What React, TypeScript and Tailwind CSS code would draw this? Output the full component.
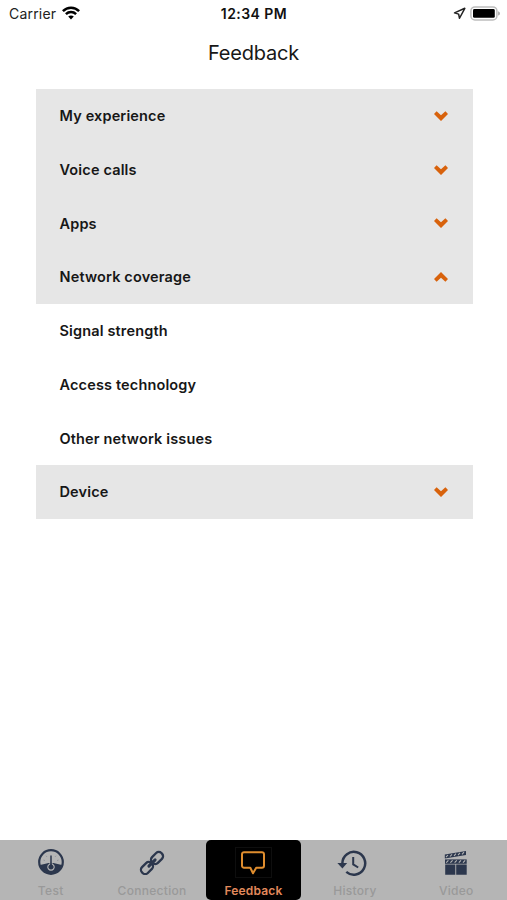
import { useState } from "react";
import type { ReactNode } from "react";

interface Category {
  title: string;
  items: string[];
}

const categories: Category[] = [
  { title: "My experience", items: [] },
  { title: "Voice calls", items: [] },
  { title: "Apps", items: [] },
  {
    title: "Network coverage",
    items: ["Signal strength", "Access technology", "Other network issues"],
  },
  { title: "Device", items: [] },
];

function StatusBar() {
  return (
    <div className="grid h-[26px] grid-cols-3 items-center pl-[9px] pr-[7px] text-[14px] text-[#222]">
      <div className="flex items-center gap-[6px]">
        <span className="tracking-[0.2px]">Carrier</span>
        <svg width="18" height="14" viewBox="0 0 18 14" fill="none" stroke="#000" strokeWidth="2.5">
          <path d="M0.9 5.1C5.4 0.5 12.6 0.5 17.1 5.1" />
          <path d="M3.9 8.2C6.8 5.4 11.2 5.4 14.1 8.2" />
          <path d="M6.2 10.6C7.8 9.2 10.2 9.2 11.8 10.6L9 13.5Z" fill="#000" stroke="none" />
        </svg>
      </div>
      <span className="-ml-[1px] text-center text-[14px] font-semibold tracking-[0.45px] text-[#111]">
        12:34 PM
      </span>
      <div className="flex items-center justify-end gap-[4px]">
        <svg width="13" height="13" viewBox="0 0 12 12" fill="none" stroke="#222" strokeWidth="1.4" strokeLinejoin="round">
          <path d="M10.9 1.2L1.4 5.4L5.2 6.6L6 10.4Z" />
        </svg>
        <svg width="30" height="15" viewBox="0 0 30 15" fill="none">
          <rect x="0.9" y="0.9" width="26" height="13" rx="4" stroke="#bdbdbd" strokeWidth="1.5" />
          <rect x="3" y="3" width="21.8" height="8.8" rx="1.4" fill="#000" />
          <path d="M28.2 5.2C30.4 6 30.4 8.8 28.2 9.6Z" fill="#a3a3a3" />
        </svg>
      </div>
    </div>
  );
}

function Chevron({ open }: { open: boolean }) {
  return (
    <svg width="14" height="10" viewBox="0 0 14 10" fill="#d8620c">
      {open ? (
        <path d="M7 0L14 7L11.4 9.8L7 5.8L2.6 9.8L0 7Z" />
      ) : (
        <path d="M7 10L14 3L11.4 0.2L7 4.2L2.6 0.2L0 3Z" />
      )}
    </svg>
  );
}

function TestIcon() {
  return (
    <svg width="26" height="26" viewBox="0 0 26 26" fill="none">
      <circle cx="13" cy="13" r="11.8" stroke="#2c374d" strokeWidth="2.2" />
      <path d="M2 16C5 15.6 8 14.4 10.5 14H15.5C18 14.4 21 15.6 24 16C23 21.5 18.6 25 13 25S3 21.5 2 16Z" fill="#2c374d" />
      <path d="M13 8L14 14.9A3.2 3.2 0 1 1 12 14.9Z" fill="#2c374d" stroke="#b5b5b5" strokeWidth="1.1" />
      <path d="M13 6.5V17.5" stroke="#2c374d" strokeWidth="1.5" />
      <path d="M5.5 11L6.8 11.5M8 6.8L8.9 7.8M18 6.8L17.1 7.8M20.5 11L19.2 11.5" stroke="#8d929b" />
    </svg>
  );
}

function ConnectionIcon() {
  return (
    <svg width="26" height="26" viewBox="0 0 26 26" fill="none" stroke="#2c374d" strokeWidth="2.3">
      <g transform="translate(0 1) rotate(-45 13 13)">
        <rect x="-0.7" y="8.9" width="13.2" height="8.2" rx="3.7" />
        <rect x="13.5" y="8.9" width="13.2" height="8.2" rx="3.7" />
        <path d="M8.6 13H17.4" strokeWidth="3" strokeLinecap="round" />
      </g>
    </svg>
  );
}

function FeedbackIcon() {
  return (
    <span className="mt-px flex h-[31px] w-[37px] items-center justify-center border border-[#0e0e0e]">
      <svg width="26" height="26" viewBox="0 0 26 26" fill="none" stroke="#df8d2e" strokeWidth="2" strokeLinejoin="round">
        <path d="M4 2.2H22A2 2 0 0 1 24 4.2V15.7A2 2 0 0 1 22 17.7H16.2L13 23.3L10.3 17.7H4A2 2 0 0 1 2 15.7V4.2A2 2 0 0 1 4 2.2Z" />
      </svg>
    </span>
  );
}

function HistoryIcon() {
  return (
    <svg className="mr-[5px] mt-px" width="30" height="26" viewBox="0 0 30 26" fill="none" stroke="#2c374d">
      <path d="M5.4 13A11.4 11.4 0 1 1 9.3 21.9" strokeWidth="2.5" />
      <path d="M0.4 13H10.2L5.4 18.4Z" fill="#2c374d" stroke="none" />
      <path d="M16.2 7V14.4L21.2 17.5" strokeWidth="2" />
    </svg>
  );
}

function VideoIcon() {
  return (
    <svg className="mt-px" width="24" height="26" viewBox="0 0 24 26" fill="#2c374d">
      <path d="M0.8 4.4L22 1V5L0.8 8.4Z" />
      <path d="M1 9.4H22.7V13.8H1Z" />
      <path d="M1.2 14.6H11.3V24.8H1.2ZM12.2 14.6H22.7V24.8H12.2Z" />
      <path
        d="M2 7.2L4 5M6 6.5L8 4.3M10 5.8L12 3.6M14 5.1L16 2.9M18 4.4L20 2.2M2.2 12.7L4.4 10.3M6.4 12.7L8.6 10.3M10.6 12.7L12.8 10.3M14.8 12.7L17 10.3M19 12.7L21.2 10.3"
        stroke="#b5b5b5"
        strokeWidth="1.1"
      />
    </svg>
  );
}

const tabs: { label: string; icon: ReactNode }[] = [
  { label: "Test", icon: <TestIcon /> },
  { label: "Connection", icon: <ConnectionIcon /> },
  { label: "Feedback", icon: <FeedbackIcon /> },
  { label: "History", icon: <HistoryIcon /> },
  { label: "Video", icon: <VideoIcon /> },
];

export default function App() {
  const [openTitle, setOpenTitle] = useState("Network coverage");
  const [activeTab, setActiveTab] = useState("Feedback");

  return (
    <div className="flex h-screen flex-col overflow-hidden bg-white font-[Inter,sans-serif] text-[#171717]">
      <StatusBar />

      <h1 className="mt-[12px] text-center text-[20px] leading-[30px] tracking-[-0.2px]">Feedback</h1>

      {/* Categories */}
      <main className="ml-[35.5px] mr-[34.5px] mt-[21px] flex-1 text-[14.5px] font-semibold tracking-[0.15px]">
        {categories.map(({ title, items }) => {
          const open = title === openTitle;
          return (
            <section key={title}>
              <button
                onClick={() => setOpenTitle(open ? "" : title)}
                aria-expanded={open}
                className="flex h-[53.75px] w-full items-center justify-between bg-[#e6e6e6] pl-6 pr-[25px]"
              >
                <span>{title}</span>
                <Chevron open={open} />
              </button>
              {open &&
                items.map((item) => (
                  <div key={item} className="flex h-[53.75px] items-center pl-6">
                    {item}
                  </div>
                ))}
            </section>
          );
        })}
      </main>

      {/* Tab bar */}
      <nav className="grid h-[60px] shrink-0 grid-cols-5 bg-[#b5b5b5]">
        {tabs.map(({ label, icon }) => {
          const active = label === activeTab;
          return (
            <button
              key={label}
              onClick={() => setActiveTab(label)}
              className={`mx-[3px] flex flex-col items-center rounded-[5px] pt-[6px] text-[12px] ${
                active ? "bg-black font-semibold text-[#e28a5c]" : "font-medium text-[#999]"
              }`}
            >
              <span className="flex h-8 items-center">{icon}</span>
              <span className={`mt-[5px] leading-4 ${active ? "tracking-[0.15px]" : "tracking-[0.3px]"}`}>
                {label}
              </span>
            </button>
          );
        })}
      </nav>
    </div>
  );
}
